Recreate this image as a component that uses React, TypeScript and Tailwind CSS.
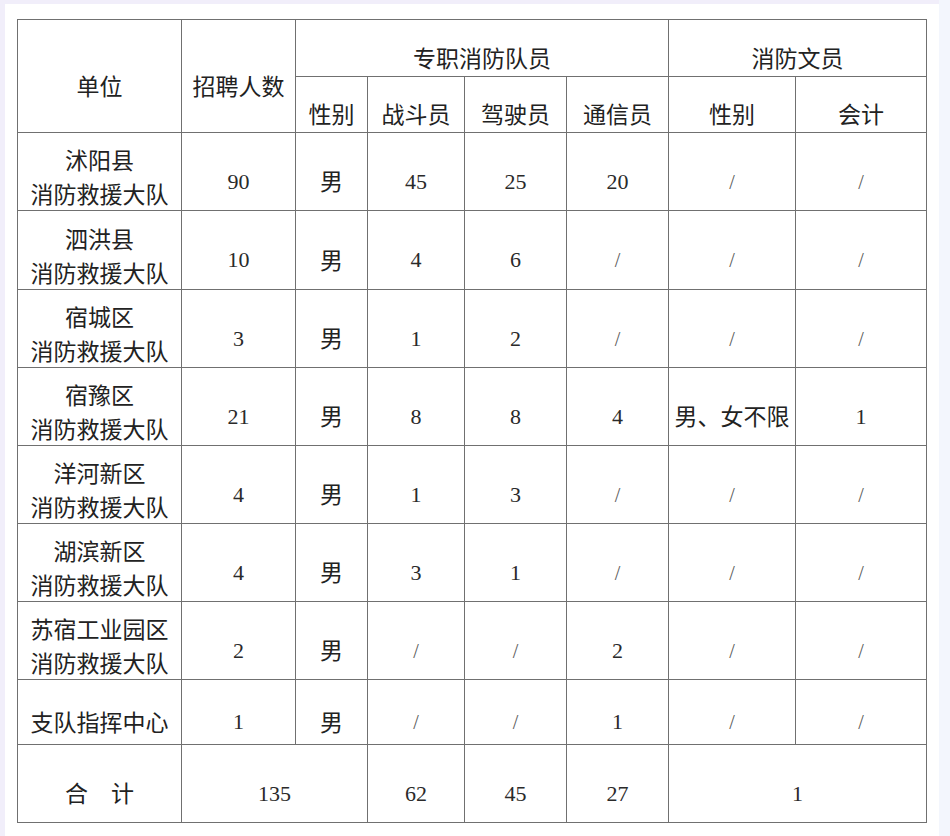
import React from 'react';

type Row = {
  unit: string[];
  total: string;
  gender: string;
  fighter: string;
  driver: string;
  comms: string;
  clerkGender: string;
  accountant: string;
  h: string;
};

const rows: Row[] = [
  { unit: ['沭阳县', '消防救援大队'], total: '90', gender: '男', fighter: '45', driver: '25', comms: '20', clerkGender: '/', accountant: '/', h: 'h-[77px]' },
  { unit: ['泗洪县', '消防救援大队'], total: '10', gender: '男', fighter: '4', driver: '6', comms: '/', clerkGender: '/', accountant: '/', h: 'h-[79px]' },
  { unit: ['宿城区', '消防救援大队'], total: '3', gender: '男', fighter: '1', driver: '2', comms: '/', clerkGender: '/', accountant: '/', h: 'h-[77px]' },
  { unit: ['宿豫区', '消防救援大队'], total: '21', gender: '男', fighter: '8', driver: '8', comms: '4', clerkGender: '男、女不限', accountant: '1', h: 'h-[77px]' },
  { unit: ['洋河新区', '消防救援大队'], total: '4', gender: '男', fighter: '1', driver: '3', comms: '/', clerkGender: '/', accountant: '/', h: 'h-[77px]' },
  { unit: ['湖滨新区', '消防救援大队'], total: '4', gender: '男', fighter: '3', driver: '1', comms: '/', clerkGender: '/', accountant: '/', h: 'h-[77px]' },
  { unit: ['苏宿工业园区', '消防救援大队'], total: '2', gender: '男', fighter: '/', driver: '/', comms: '2', clerkGender: '/', accountant: '/', h: 'h-[77px]' },
];

// single-line cells sit a little below the middle, like the source document
const cell = 'border border-[#707070] p-0 pt-[17px] text-center align-middle';
const unitCell = 'border border-[#707070] p-0 pt-[9px] text-center align-middle leading-[34px]';

function Value({ v }: { v: string }) {
  if (v === '/') {
    return <span className="font-['Liberation_Serif',serif] text-[20px] text-[#5a5a5a]">/</span>;
  }
  if (/^\d+$/.test(v)) {
    return <span className="font-['Liberation_Serif',serif] text-[22px] text-[#2a2a2a]">{v}</span>;
  }
  return <span>{v}</span>;
}

export default function App() {
  return (
    <div className="flex min-h-[836px] w-full bg-[#f1eefa]">
      <div className="mt-[4px] ml-[5px] w-[934px] shrink-0 bg-white pl-[12px] pt-[15px]">
        <table className="table-fixed border-collapse font-['Noto_Sans_CJK_SC','Noto_Sans',sans-serif] text-[23px] leading-[38px] text-[#222]">
          <colgroup>
            <col className="w-[164px]" />
            <col className="w-[114px]" />
            <col className="w-[72px]" />
            <col className="w-[97px]" />
            <col className="w-[102px]" />
            <col className="w-[102px]" />
            <col className="w-[127px]" />
            <col className="w-[131px]" />
          </colgroup>
          <tbody>
            <tr className="h-[57px]">
              <td rowSpan={2} className={cell}>单位</td>
              <td rowSpan={2} className={cell}>招聘人数</td>
              <td colSpan={4} className={cell}>专职消防队员</td>
              <td colSpan={2} className={cell}>消防文员</td>
            </tr>
            <tr className="h-[55px]">
              <td className={cell}>性别</td>
              <td className={cell}>战斗员</td>
              <td className={cell}>驾驶员</td>
              <td className={cell}>通信员</td>
              <td className={cell}>性别</td>
              <td className={cell}>会计</td>
            </tr>
            {rows.map((r) => (
              <tr key={r.unit[0]} className={r.h}>
                <td className={unitCell}>
                  <div>{r.unit[0]}</div>
                  <div>{r.unit[1]}</div>
                </td>
                <td className={cell}><Value v={r.total} /></td>
                <td className={cell}><Value v={r.gender} /></td>
                <td className={cell}><Value v={r.fighter} /></td>
                <td className={cell}><Value v={r.driver} /></td>
                <td className={cell}><Value v={r.comms} /></td>
                <td className={cell}><Value v={r.clerkGender} /></td>
                <td className={cell}><Value v={r.accountant} /></td>
              </tr>
            ))}
            <tr className="h-[65px]">
              <td className={cell}>支队指挥中心</td>
              <td className={cell}><Value v="1" /></td>
              <td className={cell}>男</td>
              <td className={cell}><Value v="/" /></td>
              <td className={cell}><Value v="/" /></td>
              <td className={cell}><Value v="1" /></td>
              <td className={cell}><Value v="/" /></td>
              <td className={cell}><Value v="/" /></td>
            </tr>
            <tr className="h-[78px]">
              <td className={cell}>合　计</td>
              <td colSpan={2} className={cell}><Value v="135" /></td>
              <td className={cell}><Value v="62" /></td>
              <td className={cell}><Value v="45" /></td>
              <td className={cell}><Value v="27" /></td>
              <td colSpan={2} className={cell}><Value v="1" /></td>
            </tr>
          </tbody>
        </table>
      </div>
      <div className="flex-1 bg-[#f3f6fd]" />
    </div>
  );
}
